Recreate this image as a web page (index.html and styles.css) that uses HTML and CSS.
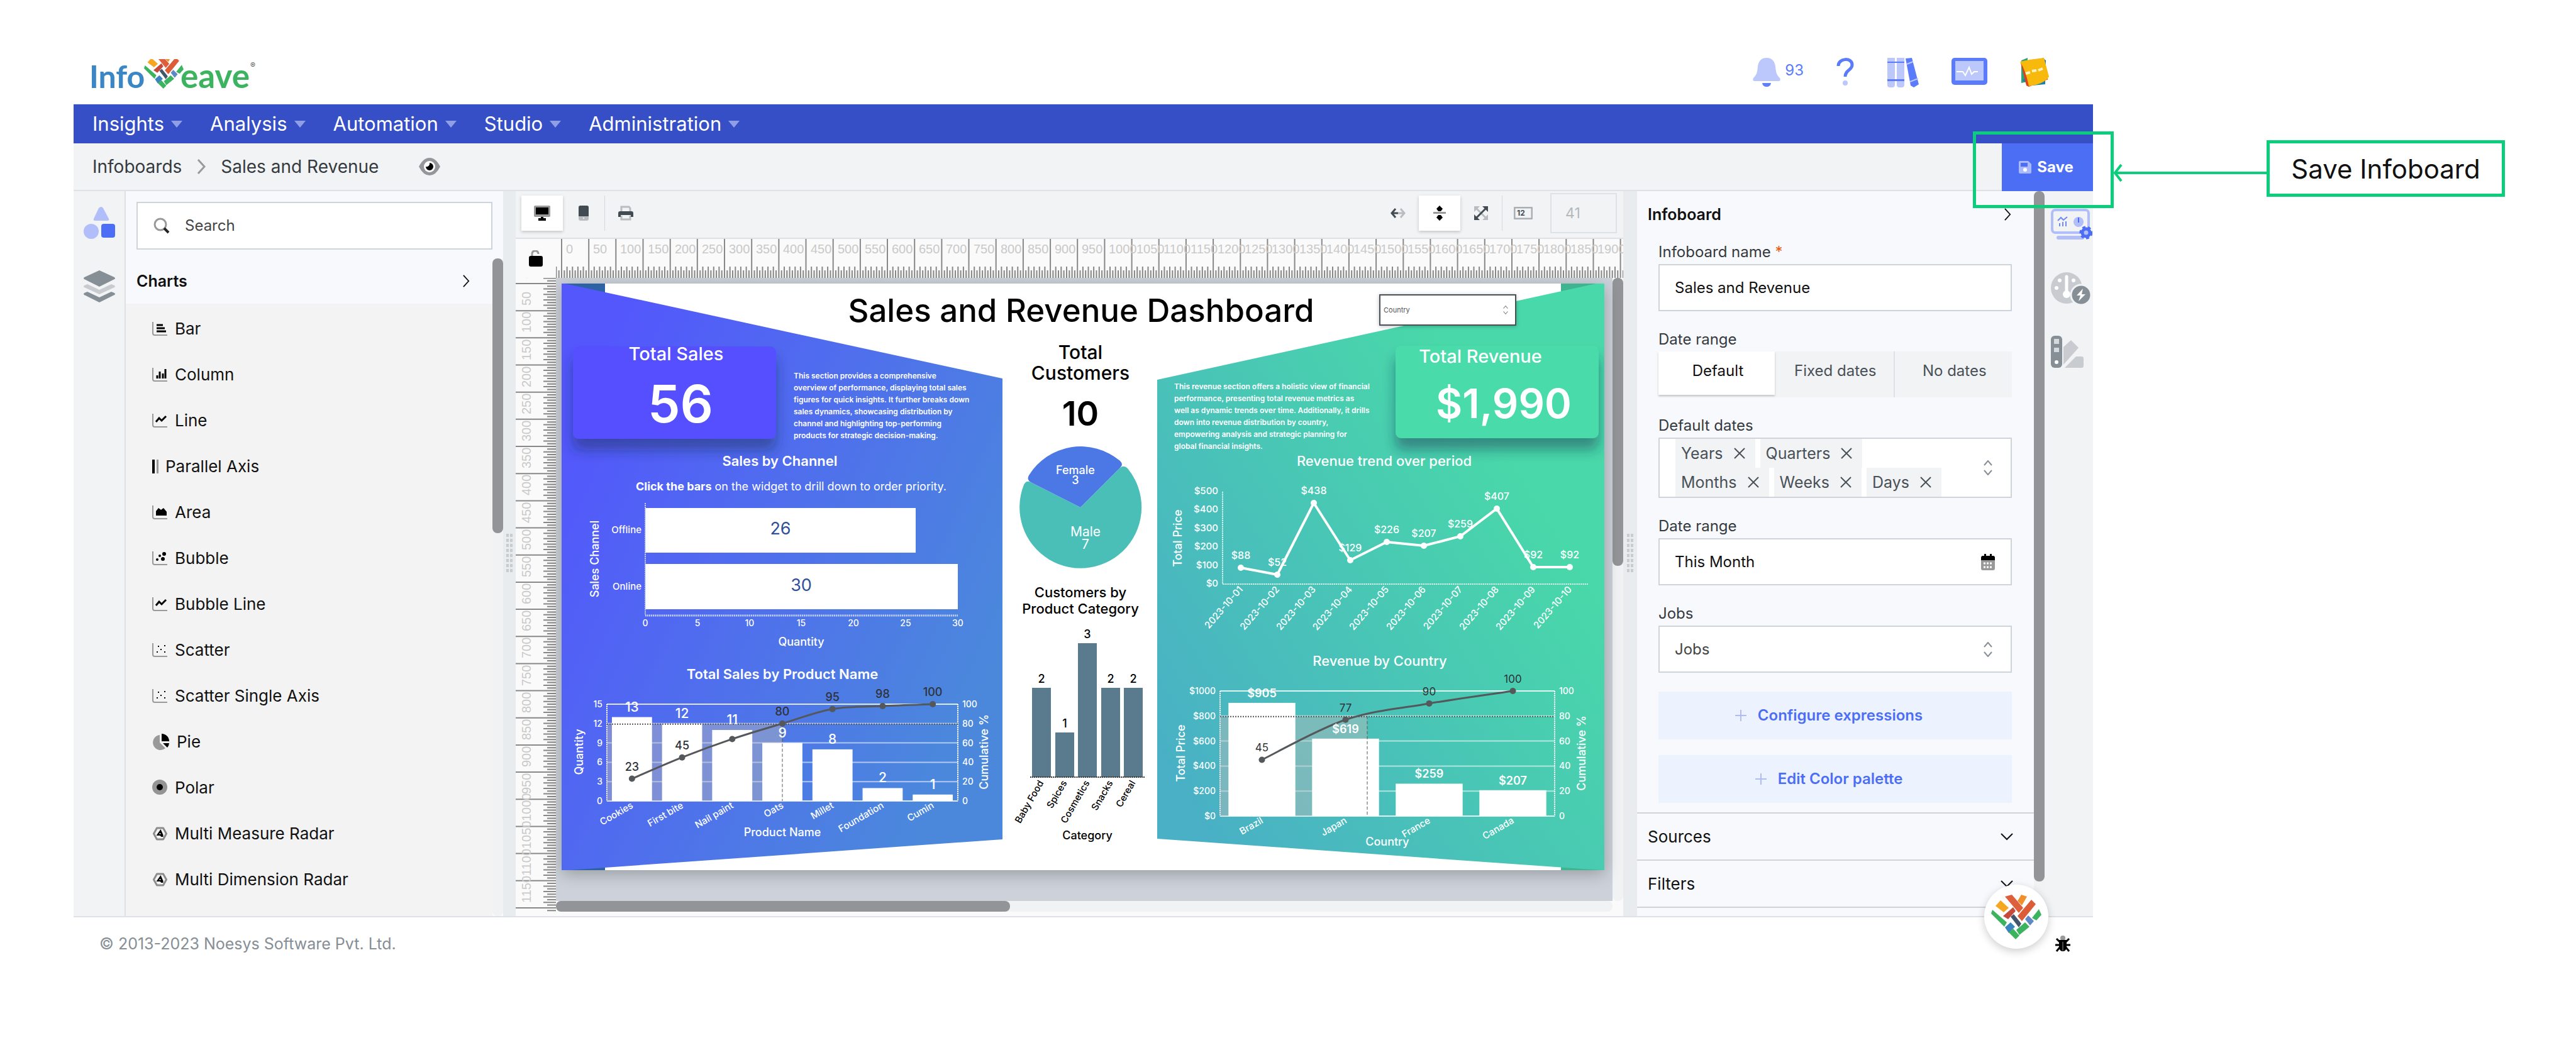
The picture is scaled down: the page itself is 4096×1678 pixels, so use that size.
FILE: index.html
```html
<!DOCTYPE html>
<html lang="en">
<head>
<meta charset="utf-8">
<title>Infoboards - Sales and Revenue</title>
<link rel="stylesheet" href="styles.css">
</head>
<body>
<svg class="defs" aria-hidden="true">
  <symbol id="emblem" viewBox="0 0 80 71">
    <path fill="#dd5f3c" d="M22 3 33 0 51 21 44 29Z"/>
    <path fill="#f0902a" d="M48 0 57 3 49 17 42 10Z"/>
    <path fill="#f5a623" d="M7 18 15 9 28 21 20 28Z"/>
    <path fill="#db5c36" d="M64 8 71 15 49 42 42 34Z"/>
    <path fill="#c64a3a" d="M35 20 39 26 27 39 19 34Z"/>
    <path fill="#3cb35f" d="M0 30 2 24 25 44 21 51Z"/>
    <path fill="#44546a" d="M31 35 36 31 48 46 44 52Z"/>
    <path fill="#3b82c0" d="M22 52 31 44 38 51 28 61Z"/>
    <path fill="#6088c6" d="M54 39 59 33 68 42 62 49Z"/>
    <path fill="#3cb35f" d="M76 23 80 32 72 41 65 37Z"/>
    <path fill="#3cb35f" d="M54 44 61 51 45 64 40 56Z"/>
    <path fill="#3cb35f" d="M28 60 35 54 45 65 39 71Z"/>
  </symbol>
  <symbol id="axis" viewBox="0 0 24 22"><path d="M1 0V18Q1 21 4 21H24" fill="none" stroke="#999" stroke-width="2"/></symbol>
  <symbol id="updown" viewBox="0 0 14 24"><path d="M1 8 7 1 13 8M1 16 7 23 13 16" fill="none" stroke="#888e96" stroke-width="2"/></symbol>
  <symbol id="down" viewBox="0 0 20 12"><path d="M1 1 10 10 19 1" fill="none" stroke="#111" stroke-width="2"/></symbol>
  <symbol id="right" viewBox="0 0 12 22"><path d="M1 1 10 11 1 21" fill="none" stroke="#111" stroke-width="2"/></symbol>
  <symbol id="radar" viewBox="0 0 24 22"><path d="M7 2H17L22 11 17 20H7L2 11Z" fill="none" stroke="#8c8c8c" stroke-width="3" stroke-linejoin="round"/><path d="M13 4 17 13V16H14L12 14H6Z" fill="#000"/><circle cx="12" cy="11" r="1" fill="#fff"/></symbol>
</svg>

<div class="page">
  <div class="app">
    <header class="top">
      <a class="logo" href="#" aria-label="Infoveave home">
        <svg width="268" height="64" viewBox="-4 -2 268 64">
          <text class="logo-text" x="-4" y="46" fill="#3b86c4">Info</text>
          <svg x="83" y="0" width="63" height="47" viewBox="0 9 63 47"><use href="#emblem" width="63" height="56"/></svg>
          <text class="logo-text logo-wide" x="141" y="46" fill="#3cb35f">eave</text>
          <text class="logo-mark" x="252" y="14" fill="#555">®</text>
        </svg>
      </a>
      <nav class="tools" aria-label="Account">
        <a class="bell" href="#"><svg width="44" height="46" viewBox="0 0 44 46"><path fill="#bcc8fb" d="M22 0C13 0 9 6 8 14 7 24 6 27 1 32Q-1 37 3 37H41Q45 37 43 32C38 27 37 24 36 14 35 6 31 0 22 0Z"/><path fill="#5f7ef8" d="M15 40H29Q28 46 22 46T15 40Z"/></svg>93</a>
        <a href="#" aria-label="Help"><svg width="28" height="46" viewBox="0 0 28 46"><path d="M3 13C3 0 25-1 25 11 25 20 14 19 14 30" fill="none" stroke="#5b7cfa" stroke-width="5"/><circle cx="14" cy="40" r="4" fill="#bcc8fb"/></svg></a>
        <a href="#" aria-label="Library"><svg width="51" height="47" viewBox="0 0 51 47"><path fill="#bcc8fb" d="M1 0H13V43Q13 47 9 47H5Q1 47 1 43ZM16 0H28V43Q28 47 24 47H20Q16 47 16 43Z"/><path fill="#5b7cfa" d="M1 6H28V8H1ZM1 34H28V37H1ZM30 1 40 0 51 42 43 47 38 44Z"/><path d="M32 10 42 6M37 38 50 33" stroke="#bcc8fb" stroke-width="2"/></svg></a>
        <a href="#" aria-label="Monitor"><svg width="57" height="43" viewBox="0 0 57 43"><rect width="57" height="43" rx="5" fill="#5b7cfa"/><path fill="#bcc8fb" d="M6 5H51V36H6Z"/><path d="M8 22H18L22 28 28 15 32 26 36 22H42" fill="none" stroke="#fff" stroke-width="2"/></svg></a>
        <a href="#" aria-label="Notes"><svg width="47" height="46" viewBox="0 0 47 46"><path fill="#2fa37a" d="M2 4 12 0 12 38 2 40Z"/><path fill="#1f7fa8" d="M36 0 41 4 40 42 20 44 4 36Z"/><path fill="#d9431e" d="M1 8 10 44 14 46 45 34Z"/><path fill="#f7b90c" d="M0 6Q18 2 38 0L46 30Q38 42 14 45 9 20 0 6Z"/><path stroke="#fff3c4" stroke-width="4" d="M9 25 16 23M19 21 26 20M29 20 36 17"/></svg></a>
      </nav>
    </header>

    <nav class="menu" aria-label="Main">
      <a href="#">Insights<i></i></a><a href="#">Analysis<i></i></a><a href="#">Automation<i></i></a><a href="#">Studio<i></i></a><a href="#">Administration<i></i></a>
    </nav>

    <div class="crumbs">
      <a href="#">Infoboards</a>
      <svg width="14" height="26" viewBox="0 0 14 26"><path d="M2 2 12 13 2 24" fill="none" stroke="#999" stroke-width="3"/></svg>
      <span>Sales and Revenue</span>
      <svg class="eye" width="34" height="28" viewBox="0 0 34 28"><path fill="#949699" d="M0 14Q7 0 17 0T34 14Q27 28 17 28T0 14Z"/><circle cx="17" cy="14" r="9" fill="#fff"/><path d="M17 8A6 6 0 1 1 11 14 5 5 0 0 0 17 8Z"/></svg>
      <button class="save" type="button"><svg width="20" height="20" viewBox="0 0 20 20"><path fill="#a9b9fb" d="M2 0H15L20 5V18Q20 20 18 20H2Q0 20 0 18V2Q0 0 2 0Z"/><path fill="#4c6ef5" d="M3 3H14V9H3Z"/><circle cx="10" cy="14" r="3" fill="#fff"/></svg>Save</button>
    </div>

    <div class="main">
      <aside class="rail">
        <svg width="50" height="51" viewBox="0 0 50 51"><path fill="#b1bef9" d="M24 2Q28-2 31 2L40 19Q41 22 38 22H18Q15 22 16 19Z"/><circle cx="12" cy="39" r="12" fill="#b1bef9"/><rect x="28" y="27" width="22" height="22" rx="4" fill="#4c6ef5"/></svg>
        <svg width="50" height="51" viewBox="0 0 50 51"><path fill="#868e96" d="M25 0 49 11Q51 13 49 14L25 26 1 14Q-1 13 1 11Z"/><path fill="#c8ccd0" d="M1 24 6 22 25 31 44 22 49 24Q51 26 49 27L25 38 1 27Q-1 26 1 24Z"/><path fill="#868e96" d="M1 36 6 34 25 43 44 34 49 36Q51 38 49 39L25 51 1 39Q-1 38 1 36Z"/></svg>
      </aside>

      <section class="library">
        <label class="search"><svg width="26" height="26" viewBox="0 0 26 26"><circle cx="11" cy="11" r="9" fill="none" stroke="#999" stroke-width="3"/><path d="M17 17 24 24" stroke="#222" stroke-width="4"/></svg><input type="text" placeholder="Search" aria-label="Search"></label>
        <div class="scroller">
          <div class="scroller-body">
            <button class="group" type="button">Charts<svg width="11" height="22"><use href="#right"/></svg></button>
            <ul class="charts">
              <li><svg width="25" height="22" viewBox="0 0 25 22"><use href="#axis" width="24" height="22"/><path d="M7 5H17M7 10H20M7 15H22" stroke="#000" stroke-width="3"/></svg>Bar</li>
              <li><svg width="25" height="22" viewBox="0 0 25 22"><use href="#axis" width="24" height="22"/><path d="M8 17V12M12 17V6M17 17V9M21 17V2" stroke="#000" stroke-width="3"/></svg>Column</li>
              <li><svg width="25" height="22" viewBox="0 0 25 22"><use href="#axis" width="24" height="22"/><path d="M6 13 11 7 15 11 22 4" fill="none" stroke="#000" stroke-width="3"/></svg>Line</li>
              <li><svg width="10" height="22" viewBox="0 0 10 22"><path fill="#000" d="M0 0H4V22H0Z"/><path fill="#999" d="M7 0H10V22H7Z"/></svg>Parallel Axis</li>
              <li><svg width="25" height="22" viewBox="0 0 25 22"><use href="#axis" width="24" height="22"/><path d="M6 16V9L10 4 14 7 18 4 23 10V16Z"/></svg>Area</li>
              <li><svg width="25" height="22" viewBox="0 0 25 22"><use href="#axis" width="24" height="22"/><circle cx="8" cy="13" r="2"/><circle cx="12" cy="7" r="2"/><circle cx="17" cy="12" r="3"/><circle cx="19" cy="4" r="3"/></svg>Bubble</li>
              <li><svg width="25" height="22" viewBox="0 0 25 22"><use href="#axis" width="24" height="22"/><path d="M6 13 11 7 15 11 22 4" fill="none" stroke="#000" stroke-width="3"/></svg>Bubble Line</li>
              <li><svg width="25" height="22" viewBox="0 0 25 22"><use href="#axis" width="24" height="22"/><path d="M7 14H9M9 5H11M13 10H15M19 14H21M19 4H21" stroke="#000" stroke-width="2"/></svg>Scatter</li>
              <li><svg width="25" height="22" viewBox="0 0 25 22"><use href="#axis" width="24" height="22"/><path d="M7 14H9M9 5H11M13 10H15M19 14H21M19 4H21" stroke="#000" stroke-width="2"/></svg>Scatter Single Axis</li>
              <li><svg width="28" height="26" viewBox="0 0 28 26"><path fill="#999" d="M12 2V14L21 23A12 12 0 1 1 12 2Z"/><path d="M15 0A12 12 0 0 1 27 12H15ZM17 15H27A12 12 0 0 1 24 22Z"/></svg>Pie</li>
              <li><svg width="25" height="25" viewBox="0 0 25 25"><circle cx="12" cy="12" r="12" fill="#949494"/><circle cx="12" cy="12" r="5"/></svg>Polar</li>
              <li><svg width="25" height="22"><use href="#radar"/></svg>Multi Measure Radar</li>
              <li><svg width="25" height="22"><use href="#radar"/></svg>Multi Dimension Radar</li>
            </ul>
          </div>
          <div class="bar-v"><div class="thumb thumb-list"></div></div>
        </div>
      </section>

      <div class="gutter"><div class="grip"></div></div>

      <section class="editor">
        <div class="toolbar">
          <button class="tool on" type="button" aria-label="Desktop"><svg width="26" height="24" viewBox="0 0 26 24"><rect width="26" height="18" rx="2" fill="#999"/><path d="M3 3H23V14H3ZM11 18H15V20H19V24H7V20H11Z"/></svg></button>
          <button class="tool" type="button" aria-label="Phone"><svg width="16" height="24" viewBox="0 0 16 24"><rect width="16" height="24" rx="3" fill="#b9bdc1"/><path fill="#434b52" d="M3 0H13Q16 0 16 3V17H0V3Q0 0 3 0Z"/><circle cx="8" cy="20" r="1" fill="#fff"/></svg></button>
          <hr>
          <button class="tool" type="button" aria-label="Print"><svg width="24" height="24" viewBox="0 0 24 24"><path d="M5 10V2H17L19 4V10M5 16V22H19V16" fill="none" stroke="#b9bdc1" stroke-width="3"/><path fill="#434b52" d="M3 9H21Q24 9 24 12V18H20V15H4V18H0V12Q0 9 3 9Z"/></svg></button>
          <span class="grow"></span>
          <button class="tool" type="button" aria-label="Fit width"><svg width="24" height="20" viewBox="0 0 24 20"><path d="M12 10H2M8 3 2 10 8 17" fill="none" stroke="#434b52" stroke-width="3"/><path d="M12 10H22M16 3 22 10 16 17" fill="none" stroke="#b9bdc1" stroke-width="3"/></svg></button>
          <button class="tool on" type="button" aria-label="Fit height"><svg width="20" height="24" viewBox="0 0 20 24"><path d="M10 0 15 5 12 9H8L5 5ZM10 24 15 19 12 15H8L5 19Z"/><path fill="#999" d="M0 10H20V13H0Z"/></svg></button>
          <button class="tool" type="button" aria-label="Expand"><svg width="22" height="22" viewBox="0 0 22 22"><path d="M3 3 19 19" stroke="#b9bdc1" stroke-width="3"/><path fill="#b9bdc1" d="M0 0H9L0 9ZM22 22H13L22 13Z"/><path d="M3 19 19 3" stroke="#434b52" stroke-width="3"/><path fill="#434b52" d="M22 0V9L13 0ZM0 22V13L9 22Z"/></svg></button>
          <hr>
          <button class="tool" type="button" aria-label="Actual size"><svg width="30" height="20" viewBox="0 0 30 20"><rect x="1" y="1" width="28" height="18" rx="2" fill="none" stroke="#abafb3" stroke-width="3"/><text class="tiny" x="5" y="14">12</text></svg></button>
          <input class="zoom" type="text" value="41" aria-label="Zoom">
        </div>
        <div class="stage">
          <div class="corner"><svg width="22" height="26" viewBox="0 0 22 26"><path d="M5 10V6Q5 1 10 1 15 1 15 6" fill="none" stroke="#999" stroke-width="3"/><rect y="9" width="22" height="17" rx="3"/></svg></div>
          <svg class="ruler-h" id="ruler-h"></svg>
          <svg class="ruler-v" id="ruler-v"></svg>
          <div class="canvas">
            <div class="board">
              <svg class="art" id="art" viewBox="0 0 1658 933">
                <defs>
                  <linearGradient id="blue" gradientUnits="userSpaceOnUse" x1="0" y1="250" x2="701" y2="560"><stop offset="0" stop-color="#5357fc"/><stop offset="1" stop-color="#4b88dc"/></linearGradient>
                  <linearGradient id="green" gradientUnits="userSpaceOnUse" x1="980" y1="800" x2="1600" y2="420"><stop offset="0" stop-color="#49b0c5"/><stop offset="1" stop-color="#49d8a9"/></linearGradient>
                  <filter id="drop" x="-10%" y="-10%" width="120%" height="150%"><feDropShadow dx="0" dy="18" stdDeviation="10" flood-color="#1f2f50" flood-opacity=".45"/></filter>
                </defs>
                <path fill="#fff" d="M0 0H1658V933H0Z"/>
                <path fill="#2d62a5" d="M0 0H69V933H0Z"/>
                <path fill="#3fb491" d="M1589 0H1658V933H1589Z"/>
                <path fill="#fff" d="M69 14 701 151V884L69 929Z"/>
                <path fill="url(#blue)" d="M0 0H5L701 151V884L12 933H0Z"/>
                <path fill="url(#green)" d="M947 153 1645 0H1658V933H1652L947 883Z"/>
                <rect x="18" y="100" width="323" height="147" rx="9" fill="#5450ff" filter="url(#drop)"/>
                <rect x="1326" y="99" width="323" height="147" rx="9" fill="#49dbaa" filter="url(#drop)"/>
                <path fill="#4abfb8" d="M825 356 888 293Q894 288 900 294A97 97 0 1 1 735 320Q739 312 746 316Z"/>
                <path fill="#4c78e6" d="M825 356 888 293Q894 288 888 282A97 97 0 0 0 743 305Q739 312 746 316Z"/>
              </svg>
              <select class="country" aria-label="Country"><option>Country</option></select>
              <svg class="country-mark" width="8" height="16"><use href="#updown"/></svg>
            </div>
          </div>
          <div class="bar-v bar-canvas"><div class="thumb thumb-canvas"></div></div>
          <div class="bar-h"><div class="thumb thumb-wide"></div></div>
        </div>
      </section>

      <div class="gutter"><div class="grip"></div></div>

      <section class="props">
        <div class="props-body">
          <button class="group props-head" type="button">Infoboard<svg width="11" height="22"><use href="#right"/></svg></button>
          <form class="fields">
            <div class="field"><label for="name">Infoboard name <b>*</b></label><input class="box" id="name" type="text" value="Sales and Revenue"></div>
            <div class="field"><span class="caption">Date range</span>
              <div class="tabs"><button class="on" type="button">Default</button><button type="button">Fixed dates</button><button type="button">No dates</button></div></div>
            <div class="field"><span class="caption">Default dates</span>
              <div class="multi">
                <div class="chips">
                  <span>Years<button type="button" aria-label="Remove Years"><svg width="18" height="18" viewBox="0 0 18 18"><path d="M1 1 17 17M17 1 1 17"/></svg></button></span>
                  <span>Quarters<button type="button" aria-label="Remove Quarters"><svg width="18" height="18" viewBox="0 0 18 18"><path d="M1 1 17 17M17 1 1 17"/></svg></button></span>
                  <span>Months<button type="button" aria-label="Remove Months"><svg width="18" height="18" viewBox="0 0 18 18"><path d="M1 1 17 17M17 1 1 17"/></svg></button></span>
                  <span>Weeks<button type="button" aria-label="Remove Weeks"><svg width="18" height="18" viewBox="0 0 18 18"><path d="M1 1 17 17M17 1 1 17"/></svg></button></span>
                  <span>Days<button type="button" aria-label="Remove Days"><svg width="18" height="18" viewBox="0 0 18 18"><path d="M1 1 17 17M17 1 1 17"/></svg></button></span>
                </div>
                <svg width="14" height="24"><use href="#updown"/></svg>
              </div></div>
            <div class="field"><label for="range">Date range</label>
              <div class="affix"><input class="box" id="range" type="text" value="This Month"><svg width="22" height="26" viewBox="0 0 22 26"><path fill="#999" d="M0 9H22V23Q22 26 19 26H3Q0 26 0 23Z"/><path d="M3 3H5V0H8V3H14V0H17V3H19Q22 3 22 6V10H0V6Q0 3 3 3Z"/><path d="M4 15H18M4 21H18" stroke="#fff" stroke-width="3" stroke-dasharray="3 2"/></svg></div></div>
            <div class="field"><label for="jobs">Jobs</label>
              <div class="affix"><select class="box" id="jobs"><option>Jobs</option></select><svg width="14" height="24"><use href="#updown"/></svg></div></div>
            <button class="soft" type="button"><svg width="18" height="18" viewBox="0 0 18 18"><path d="M9 0V18M0 9H18" stroke="#aebcf8" stroke-width="2"/></svg>Configure expressions</button>
            <button class="soft" type="button"><svg width="18" height="18" viewBox="0 0 18 18"><path d="M9 0V18M0 9H18" stroke="#aebcf8" stroke-width="2"/></svg>Edit Color palette</button>
          </form>
          <button class="section" type="button">Sources<svg width="20" height="12"><use href="#down"/></svg></button>
          <button class="section" type="button">Filters<svg width="20" height="12"><use href="#down"/></svg></button>
          <div class="section-end"></div>
        </div>
        <div class="bar-v"><div class="thumb thumb-props"></div></div>
      </section>

      <aside class="rail rail-right">
        <svg width="66" height="50" viewBox="0 0 66 50"><rect x="2" y="2" width="58" height="36" rx="5" fill="none" stroke="#b1bef9" stroke-width="4"/><path fill="#b1bef9" d="M12 43H50Q53 43 53 46T50 49H12Q9 49 9 46T12 43Z"/><circle cx="44" cy="21" r="8" fill="#b1bef9"/><path d="M11 19 16 14 20 18 26 13M14 28V23M19 28V21M24 28V20" fill="none" stroke="#6f8af7" stroke-width="2"/><path d="M44 14V22" stroke="#4c6ef5" stroke-width="2"/><circle cx="56" cy="38" r="6" fill="#b1bef9" stroke="#4c6ef5" stroke-width="5"/><circle cx="56" cy="38" r="9" fill="none" stroke="#4c6ef5" stroke-width="3" stroke-dasharray="5 4"/></svg>
        <svg width="64" height="52" viewBox="0 0 64 52"><circle cx="25" cy="26" r="25" fill="#c8ccd0"/><path d="M25 8V36" stroke="#fff" stroke-width="5" stroke-linecap="round"/><circle cx="25" cy="36" r="6" fill="#fff"/><circle cx="9" cy="26" r="3" fill="#fff"/><circle cx="14" cy="14" r="3" fill="#fff"/><circle cx="36" cy="14" r="3" fill="#fff"/><circle cx="48" cy="37" r="16" fill="#868e96" stroke="#f1f3f5" stroke-width="3"/><path fill="#fff" d="M51 27 41 38H47L44 47 55 36H49Z"/></svg>
        <svg width="52" height="52" viewBox="0 0 52 52"><path fill="#c8ccd0" d="M20 18 32 7 44 19 20 46ZM22 51 40 33H49Q52 33 52 36V48Q52 51 49 51Z"/><rect width="18" height="51" rx="6" fill="#868e96"/><path fill="#d5d9dc" d="M5 5H13V13H5ZM5 19H13V26H5Z"/><circle cx="9" cy="42" r="3" fill="#fff"/></svg>
      </aside>
    </div>

    <footer class="foot">
      <span>© 2013-2023 Noesys Software Pvt. Ltd.</span>
      <svg width="24" height="26" viewBox="0 0 24 26"><circle cx="12" cy="4" r="4" fill="#999"/><path d="M2 5 7 10M22 5 17 10M0 15H24M2 25 7 19M22 25 17 19" stroke="#000" stroke-width="3"/><path d="M6 7H18V19Q17 25 12 25T6 19Z"/><path d="M12 10V24" stroke="#999"/></svg>
      <button class="bubble" type="button" aria-label="Assistant"><svg width="80" height="71"><use href="#emblem"/></svg></button>
    </footer>
  </div>

  <div class="mark"></div>
  <svg class="arrow" width="244" height="30" viewBox="0 0 244 30"><path d="M2 15H244M12 2 2 15 12 28" fill="none" stroke="#0bce7c" stroke-width="4"/></svg>
  <div class="note">Save Infoboard</div>
</div>
<script src="app.js"></script>
</body>
</html>
```
FILE: styles.css
```css
* { box-sizing: border-box; }
body { margin: 0; background: #fff; color: #111; font: 400 24px/30px Inter, "Noto Sans", sans-serif; }
button, input, select { margin: 0; padding: 0; border: 0; border-radius: 0; background: none; color: inherit; font: inherit; appearance: none; }
a { color: inherit; text-decoration: none; }
svg { display: block; flex: none; }
.defs { position: absolute; width: 0; height: 0; }

.page { position: relative; min-height: 100vh; }
.app { padding: 0 768px 0 117px; }

.top { display: flex; align-items: flex-start; justify-content: space-between; height: 166px; padding: 92px 69px 0 25px; border-bottom: 1px solid #e3e6ea; }
.logo-text { font: 700 50px Lato, sans-serif; }
.logo-wide { font-size: 53px; }
.logo-mark { font: 400 12px Inter, sans-serif; }
.tools { display: flex; gap: 52px; }
.bell { display: flex; gap: 7px; color: #5b7cfa; line-height: 40px; }

.menu { display: flex; gap: 44px; height: 62px; padding-left: 30px; background: #364fc7; color: #fff; font-size: 31px; line-height: 60px; }
.menu a { display: flex; align-items: center; gap: 11px; }
.menu i { border: 9px solid transparent; border-top: 11px solid #8f9fe6; border-bottom: 0; }

.crumbs { display: flex; align-items: center; height: 76px; padding-left: 30px; gap: 24px; background: #f1f3f5; border-bottom: 2px solid #dee2e6; color: #343a40; font-size: 28px; }
.eye { margin-left: 40px; }
.save { display: flex; align-items: center; justify-content: center; gap: 9px; width: 145px; height: 76px; margin: 0 0 -2px auto; padding-right: 4px; background: #4c6ef5; color: #fff; font-size: 24px; font-weight: 700; }

.main { display: grid; grid-template-columns: 83px 600px 20px 1fr 22px 648px 77px; border-bottom: 2px solid #dee2e6; background: #f1f3f5; }
.rail { display: flex; flex-direction: column; gap: 50px; padding: 25px 16px; border-right: 2px solid #dee2e6; }
.rail-right { padding: 28px 0 0 10px; border: 0; }

.library { display: flex; flex-direction: column; background: #f8f9fc; }
.search { display: flex; align-items: center; gap: 24px; height: 76px; margin: 17px 17px 14px; padding-left: 25px; background: #fff; border: 2px solid #ced4da; }
.search input { width: 400px; font-size: 24px; }
.search input::placeholder { color: #444; opacity: 1; }
.scroller { display: grid; grid-template-columns: 1fr 17px; flex: 1; }
.scroller-body { background: #f3f3f3; }
.group { display: flex; align-items: center; justify-content: space-between; width: 100%; height: 72px; padding: 0 36px 0 17px; background: #f8f9fc; font-weight: 600; font-size: 25px; }
.charts { margin: 0; padding: 3px 0 20px 42px; list-style: none; font-size: 26px; }
.charts li { display: flex; align-items: center; gap: 11px; height: 73px; }
.bar-v { background: #f1f2f4; border-radius: 8px; }
.thumb { background: #929497; border-radius: 8px; }
.thumb-list { height: 437px; }
.thumb-props { height: 1098px; }
.thumb-canvas { height: 458px; }
.thumb-wide { width: 43%; height: 100%; }

.gutter { display: flex; align-items: center; justify-content: center; background: #e9ecef; }
.grip { width: 10px; height: 64px; background: repeating-linear-gradient(#0000 0 5px, #e9ecef 5px 8px), linear-gradient(90deg, #c9cccf 4px, #0000 4px 6px, #c9cccf 6px); }

.editor { display: flex; flex-direction: column; min-width: 0; }
.toolbar { display: flex; align-items: center; height: 76px; padding: 0 10px 4px 9px; border-bottom: 2px solid #dee2e6; }
.tool { display: grid; place-items: center; width: 66px; height: 56px; }
.tool.on { background: #fff; box-shadow: 0 2px 5px #0003; }
.toolbar hr { width: 1px; height: 56px; margin: 0; border: 0; background: #d5d9dd; }
.grow { flex: 1; }
.tiny { font: 700 12px Inter, sans-serif; fill: #434b52; }
.zoom { width: 106px; height: 64px; margin-left: 10px; padding-left: 22px; border: 2px solid #dee2e6; color: #b5b8bb; font-size: 23px; }
.stage { display: grid; grid-template: 62px 1fr 17px 7px / 64px 1fr 17px; flex: 1; background: #fafafa; }
.corner { display: grid; place-items: center; }
.ruler-h { grid-column: 2 / 4; width: 100%; height: 62px; }
.ruler-v { grid-row: 2 / 4; width: 64px; height: 0; min-height: 100%; }
.ruler-h text, .ruler-v text { font: 400 20px "Liberation Sans", sans-serif; fill: #c9c9c9; }
.ruler-h path, .ruler-v path { stroke: #888; stroke-width: 2; }
.canvas { grid-area: 2 / 2; padding: 9px 13px 49px 9px; background: #cdd2da; }
.board { position: relative; box-shadow: 0 6px 24px #0004; }
.art { width: 100%; height: auto; font-family: Inter, sans-serif; }
.country { position: absolute; left: 1300px; top: 17px; width: 218px; height: 50px; padding-left: 5px; border: 2px solid #495057; background: #fff; box-shadow: 0 1px 6px #0004; color: #555; font-size: 11px; }
.country-mark { position: absolute; left: 1497px; top: 34px; }
.bar-canvas { grid-area: 2 / 3; }
.bar-h { grid-area: 3 / 2; background: #f1f2f4; border-radius: 8px; }

.props { display: grid; grid-template-columns: 1fr 17px; background: #f8f9fc; }
.props-head { height: 74px; font-size: 25px; }
.fields { padding: 8px 35px 15px 34px; color: #343a40; }
.field { display: flex; flex-direction: column; gap: 4px; margin-bottom: 30px; }
.field b { color: #e8590c; font-weight: 400; }
.box { width: 100%; height: 75px; padding-left: 24px; background: #fff; border: 2px solid #ced4da; color: #111; font-size: 24px; }
select.box { color: #444; }
.tabs { display: grid; grid-template-columns: 185px 1fr 1fr; height: 73px; background: #f1f3f5; color: #495057; font-size: 24px; }
.tabs button { padding: 0 0 11px 4px; }
.tabs button + button + button { border-left: 2px solid #dee2e6; }
.tabs .on { margin-bottom: 4px; padding-bottom: 7px; background: #fff; color: #111; box-shadow: 0 2px 3px #0003; }
.multi { display: flex; align-items: center; justify-content: space-between; padding: 0 29px 0 25px; background: #fff; border: 2px solid #ced4da; color: #495057; font-size: 25px; }
.chips { display: flex; flex-wrap: wrap; column-gap: 8px; width: 426px; }
.chips span { display: flex; align-items: center; gap: 17px; height: 46px; padding: 0 16px 0 9px; background: #f1f3f5; }
.chips path { stroke: #495057; stroke-width: 2; }
.affix { display: flex; align-items: center; }
.affix svg { margin: 0 27px 0 -49px; }
.affix select + svg { margin: 0 31px 0 -45px; }
.soft { display: flex; align-items: center; justify-content: center; gap: 18px; width: 100%; height: 76px; margin-bottom: 25px; padding-right: 20px; background: #edf2ff; color: #4c6ef5; font-weight: 600; font-size: 24px; }
.soft:last-child { margin-bottom: 0; }
.section { display: flex; align-items: center; justify-content: space-between; width: 100%; height: 75px; padding: 0 33px 0 17px; border-top: 2px solid #ced4da; font-size: 26px; }
.section-end { border-top: 2px solid #ced4da; }

.foot { position: relative; display: flex; align-items: center; justify-content: space-between; height: 84px; padding: 0 36px 0 41px; color: #868e96; font-size: 25px; }
.bubble { position: absolute; right: 71px; top: -52px; display: grid; place-items: center; width: 102px; height: 102px; border-radius: 50%; background: #fff; box-shadow: 0 4px 14px #0003; }

.mark { position: absolute; right: 735px; top: 209px; width: 224px; height: 122px; border: 5px solid #0bce7c; }
.arrow { position: absolute; right: 491px; top: 260px; }
.note { position: absolute; right: 113px; top: 223px; width: 379px; height: 90px; border: 5px solid #0bce7c; font-size: 42px; line-height: 82px; text-align: center; }
```
FILE: app.js
```js
const NS = 'http://www.w3.org/2000/svg';

function add(parent, tag, attrs, content) {
  const node = document.createElementNS(NS, tag);
  for (const key in attrs) node.setAttribute(key, attrs[key]);
  if (content !== undefined) node.textContent = content;
  parent.appendChild(node);
  return node;
}

// Rulers: a long line every 50 units, a medium tick every 10, a short one every 5.
function ruler(svg, vertical, count) {
  const step = 43.17;
  let d = '';
  for (let i = -10; i < count * 10; i++) {
    const at = (9 + i * step / 10).toFixed(1);
    const from = i % 10 === 0 ? 0 : i % 2 === 0 ? 44 : 50;
    d += vertical ? `M${from} ${at}H64` : `M${at} ${from}V62`;
  }
  add(svg, 'path', { d });
  for (let i = 0; i < count; i++) {
    const at = Math.round(9 + i * step);
    if (vertical) add(svg, 'text', { transform: `translate(24 ${at - 8}) rotate(-90)` }, i * 50);
    else add(svg, 'text', { x: at + 7, y: 23 }, i * 50);
  }
}
ruler(document.getElementById('ruler-h'), false, 40);
ruler(document.getElementById('ruler-v'), true, 24);

const art = document.getElementById('art');

function text(x, y, str, size, o = {}) {
  const a = { 'font-size': size, fill: o.fill || '#fff', 'font-weight': o.weight || 500, 'text-anchor': o.anchor || 'middle' };
  if (o.rotate) a.transform = `translate(${x} ${y}) rotate(${o.rotate})`;
  else { a.x = x; a.y = y; }
  return add(art, 'text', a, str);
}
const rect = (x, y, w, h, fill) => add(art, 'rect', { x, y, width: w, height: h, fill });
const line = (d, stroke, width, dash) => add(art, 'path', { d, stroke, fill: 'none', 'stroke-width': width, 'stroke-dasharray': dash || 'none' });

// Headline numbers
text(826, 61, 'Sales and Revenue Dashboard', 51, { fill: '#000' });
text(182, 122, 'Total Sales', 29);
text(189, 221, '56', 82, { weight: 600 });
text(1461, 126, 'Total Revenue', 29);
text(1498, 214, '$1,990', 65, { weight: 600 });
text(825, 120, 'Total', 30, { fill: '#000' });
text(825, 153, 'Customers', 30, { fill: '#000' });
text(825, 226, '10', 54, { fill: '#000', weight: 600 });

['This section provides a comprehensive', 'overview of performance, displaying total sales', 'figures for quick insights. It further breaks down', 'sales dynamics, showcasing distribution by', 'channel and highlighting top-performing', 'products for strategic decision-making.']
  .forEach((s, i) => text(369, 151 + i * 19, s, 12, { anchor: 'start', weight: 600 }));
['This revenue section offers a holistic view of financial', 'performance, presenting total revenue metrics as', 'well as dynamic trends over time. Additionally, it drills', 'down into revenue distribution by country,', 'empowering analysis and strategic planning for', 'global financial insights.']
  .forEach((s, i) => text(974, 168 + i * 19, s, 12, { anchor: 'start', weight: 600 }));

// Customers pie
text(817, 303, 'Female', 18);
text(817, 319, '3', 18);
text(833, 402, 'Male', 21, { weight: 400 });
text(833, 422, '7', 21, { weight: 400 });

// Customers by product category
text(825, 499, 'Customers by', 22, { fill: '#000' });
text(825, 525, 'Product Category', 22, { fill: '#000' });
[['Baby Food', 2], ['Spices', 1], ['Cosmetics', 3], ['Snacks', 2], ['Cereal', 2]].forEach(([name, n], i) => {
  const x = 763 + Math.round(i * 36.6);
  const top = 785 - n * 71;
  rect(x - 15, top, 30, 785 - top, '#5a7a8e');
  text(x, top - 8, n, 18, { fill: '#000' });
  text(x + 4, 794, name, 15, { fill: '#000', anchor: 'end', rotate: -60 });
});
line('M745 785H928', '#333', 2, '2 1');
text(836, 884, 'Category', 18, { fill: '#000' });

// Sales by channel
text(347, 290, 'Sales by Channel', 22, { weight: 600 });
const hint = text(365, 329, '', 18, { weight: 400 });
add(hint, 'tspan', { 'font-weight': 700 }, 'Click the bars');
add(hint, 'tspan', {}, ' on the widget to drill down to order priority.');
rect(133, 357, 430, 71, '#fff');
rect(133, 446, 497, 72, '#fff');
text(348, 399, '26', 27, { weight: 400, fill: '#2f4f9a' });
text(381, 489, '30', 27, { weight: 400, fill: '#2f4f9a' });
text(127, 397, 'Offline', 15, { anchor: 'end' });
text(127, 487, 'Online', 15, { anchor: 'end' });
line('M133 349V527', '#c5d0fa', 2, '2 1');
line('M133 528H630', '#c5d0fa', 3, '2 1');
[0, 5, 10, 15, 20, 25, 30].forEach(n => text(133 + Math.round(n * 16.55), 545, n, 14));
text(381, 576, 'Quantity', 18);
text(59, 438, 'Sales Channel', 18, { rotate: -90 });

// Bars with a cumulative line and two value axes
function pareto(c) {
  const h = c.bottom - c.top;
  for (let i = 0; i <= 5; i++) {
    const y = c.bottom - h * i / 5;
    line(`M${c.left} ${y}H${c.right}`, i % 5 ? '#ffffff90' : '#ffffffd0', 2);
    text(c.left - 7, y + 5, c.prefix + i * c.max / 5, 14, { anchor: 'end' });
    text(c.right + 7, y + 5, i * 20, 14, { anchor: 'start' });
  }
  line(`M${c.left} ${c.top}V${c.bottom}M${c.right} ${c.top}V${c.bottom}`, '#fff', 2, '2 1');
  const cut = c.bottom - h * 0.8;
  rect(c.left, cut, c.split - c.left, c.bottom - cut, '#bbbbbb70');
  const pitch = (c.right - c.left) / c.data.length;
  c.data.forEach((row, i) => {
    row.x = c.left + pitch * (i + 0.5);
    row.top = c.bottom - h * row.v / c.max;
    row.y = c.bottom - h * row.c / 100;
    rect(row.x - pitch * 0.4, row.top, pitch * 0.8, c.bottom - row.top, '#fff');
    text(row.x + 3, c.bottom + 10, row.name, 15, { anchor: 'end', rotate: -30 });
  });
  line(`M${c.left} ${cut + 1}H${c.right}`, '#555', 2, '2 2');
  line(`M${c.split} ${cut}V${c.bottom}`, '#555', 1, '5 3');
  const p = c.data;
  let d = `M${p[0].x} ${p[0].y}`;
  for (let i = 1; i < p.length; i++) {
    const a = p[Math.max(i - 2, 0)], b = p[i - 1], e = p[i], f = p[Math.min(i + 1, p.length - 1)];
    d += `C${b.x + (e.x - a.x) / 6} ${b.y + (e.y - a.y) / 6} ${e.x - (f.x - b.x) / 6} ${e.y - (f.y - b.y) / 6} ${e.x} ${e.y}`;
  }
  line(d, '#55585b', 3);
  p.forEach(row => {
    add(art, 'circle', { cx: row.x, cy: row.y, r: 5, fill: '#55585b' });
    text(row.x, row.top - 9, c.prefix + row.v, c.size, { weight: c.prefix ? 600 : 500 });
    if (!row.quiet) text(row.x, row.y - 13, row.c, c.lineSize, { fill: '#2f3236', weight: c.lineWeight });
  });
}

text(351, 629, 'Total Sales by Product Name', 22, { weight: 600 });
pareto({ left: 72, right: 630, top: 669, bottom: 823, max: 15, prefix: '', split: 351, size: 21, lineSize: 18, lineWeight: 500, data: [
  { name: 'Cookies', v: 13, c: 23 }, { name: 'First bite', v: 12, c: 45 }, { name: 'Nail paint', v: 11, c: 64, quiet: true },
  { name: 'Oats', v: 9, c: 80 }, { name: 'Millet', v: 8, c: 95 }, { name: 'Foundation', v: 2, c: 98 }, { name: 'Cumin', v: 1, c: 100 }] });
text(351, 879, 'Product Name', 18);
text(34, 745, 'Quantity', 18, { rotate: -90 });
text(678, 745, 'Cumulative %', 18, { rotate: -90 });

// Revenue trend
text(1308, 290, 'Revenue trend over period', 22);
for (let i = 0; i <= 5; i++) text(1044, Math.round(482 - i * 29.5), '$' + i * 100, 15, { anchor: 'end' });
line('M1051 331V478H1633', '#d8f3ea', 2, '2 1');
const trend = [88, 52, 438, 129, 226, 207, 259, 407, 92, 92];
const points = trend.map((v, i) => [Math.round(1080 + i * 58.1), Math.round(478 - v * 0.295)]);
line('M' + points.map(p => p.join(' ')).join('L'), '#fff', 4);
points.forEach(([x, y], i) => {
  add(art, 'circle', { cx: x, cy: y, r: 5, fill: '#fff' });
  text(x, y - 14, '$' + trend[i], 16);
  text(x + 4, 487, '2023-10-' + String(i + 1).padStart(2, '0'), 15, { anchor: 'end', rotate: -49 });
});
text(986, 405, 'Total Price', 18, { rotate: -90 });

// Revenue by country
text(1301, 608, 'Revenue by Country', 22);
pareto({ left: 1047, right: 1579, top: 648, bottom: 847, max: 1000, prefix: '$', split: 1281, size: 18, lineSize: 17, lineWeight: 400, data: [
  { name: 'Brazil', v: 905, c: 45 }, { name: 'Japan', v: 619, c: 77 }, { name: 'France', v: 259, c: 90 }, { name: 'Canada', v: 207, c: 100 }] });
text(1313, 894, 'Country', 18);
text(991, 747, 'Total Price', 18, { rotate: -90 });
text(1628, 747, 'Cumulative %', 18, { rotate: -90 });
```
